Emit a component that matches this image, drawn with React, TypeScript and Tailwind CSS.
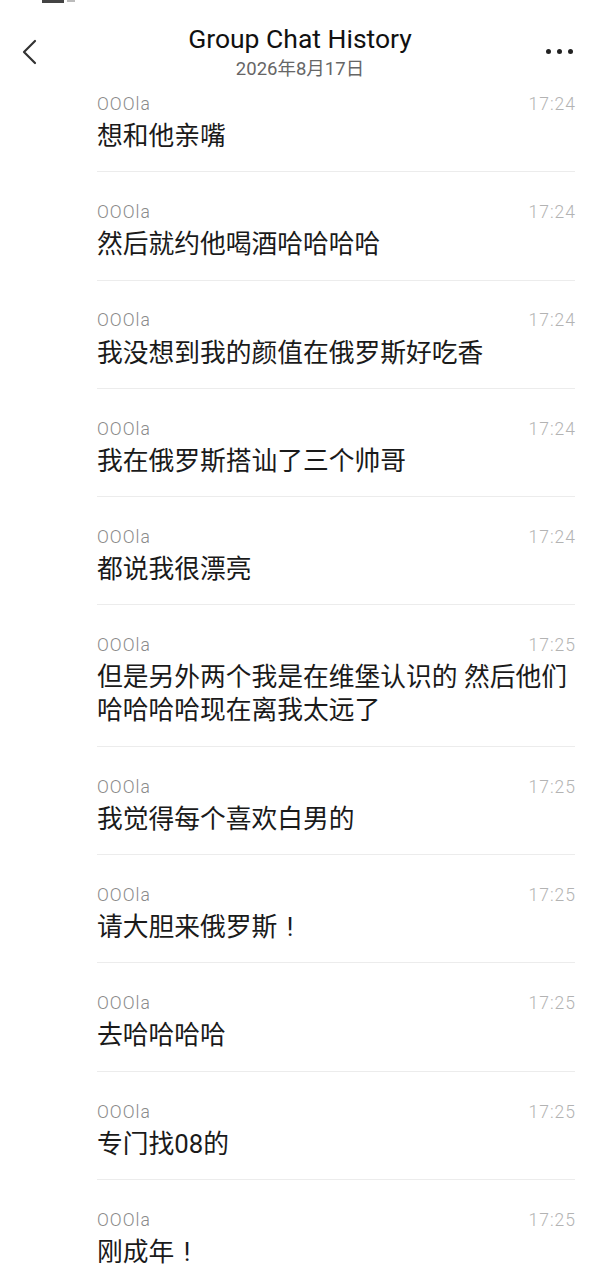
import React from "react"

const messages = [
    { time: "17:24", text: "想和他亲嘴" },
    { time: "17:24", text: "然后就约他喝酒哈哈哈哈" },
    { time: "17:24", text: "我没想到我的颜值在俄罗斯好吃香" },
    { time: "17:24", text: "我在俄罗斯搭讪了三个帅哥" },
    { time: "17:24", text: "都说我很漂亮" },
    { time: "17:25", text: "但是另外两个我是在维堡认识的 然后他们哈哈哈哈现在离我太远了" },
    { time: "17:25", text: "我觉得每个喜欢白男的" },
    { time: "17:25", text: "请大胆来俄罗斯！" },
    { time: "17:25", text: "去哈哈哈哈" },
    { time: "17:25", text: "专门找08的" },
    { time: "17:25", text: "刚成年！" },
]

const font = "font-['Roboto','Noto_Sans_CJK_SC',sans-serif]"

// full-width "！" drawn centred in a one-em box
function Text({ value }: { value: string }) {
    const parts = value.split("！")
    return (
        <>
            {parts.map((p, i) => (
                <React.Fragment key={i}>
                    {p}
                    {i < parts.length - 1 && (
                        <span className="inline-block w-[1em] text-center">!</span>
                    )}
                </React.Fragment>
            ))}
        </>
    )
}

export default function App() {
    return (
        <div className={`w-[600px] h-[1280px] overflow-hidden bg-white ${font}`}>

            {/* status bar leftover */}
            <div className="h-0 relative">
                <div className="absolute left-[42px] top-0 w-[22px] h-[3px] bg-[#444]" />
                <div className="absolute left-[67px] top-0 w-[8px] h-[2px] bg-[#bbb]" />
            </div>

            {/* Header */}
            <div className="flex items-start px-5 pt-[24px]">
                <div className="w-[60px] pt-[15px]">
                    <svg width="16" height="26" viewBox="0 0 16 26" className="ml-[1px]">
                        <path d="M14 2 L3 13 L14 24" fill="none" stroke="#333" strokeWidth="2.2" strokeLinecap="round" strokeLinejoin="round" />
                    </svg>
                </div>
                <div className="flex-1 flex flex-col items-center">
                    <h1 className="text-[26.5px] leading-[30px] text-[#111]">Group Chat History</h1>
                    <p className="mt-[4px] text-[18.5px] leading-[22px] text-[#666]">2026年8月17日</p>
                </div>
                <div className="w-[60px] flex justify-end gap-[6px] pt-[25px] pr-[7px]">
                    <span className="w-[5px] h-[5px] rounded-full bg-[#222]" />
                    <span className="w-[5px] h-[5px] rounded-full bg-[#222]" />
                    <span className="w-[5px] h-[5px] rounded-full bg-[#222]" />
                </div>
            </div>

            {/* Messages */}
            <div className="pl-[97px] pr-[25px] pt-[14px]">
                {messages.map((m, i) => (
                    <div
                        key={i}
                        className={`${i === 0 ? "" : "pt-[30px]"} pb-[18.3px] border-b border-[#ececec]`}
                    >
                        <div className="flex justify-between items-center h-[20px]">
                            <span className="text-[17.5px] font-light tracking-[1px] text-[#8a8a8a]">OOOla</span>
                            <span className="text-[17.5px] font-light tracking-[1px] -mr-[1px] text-[#b3b3b3]">{m.time}</span>
                        </div>
                        <p className="mt-[6px] text-[25.75px] leading-[33px] text-[#1a1a1a]">
                            <Text value={m.text} />
                        </p>
                    </div>
                ))}
            </div>
        </div>
    )
}
